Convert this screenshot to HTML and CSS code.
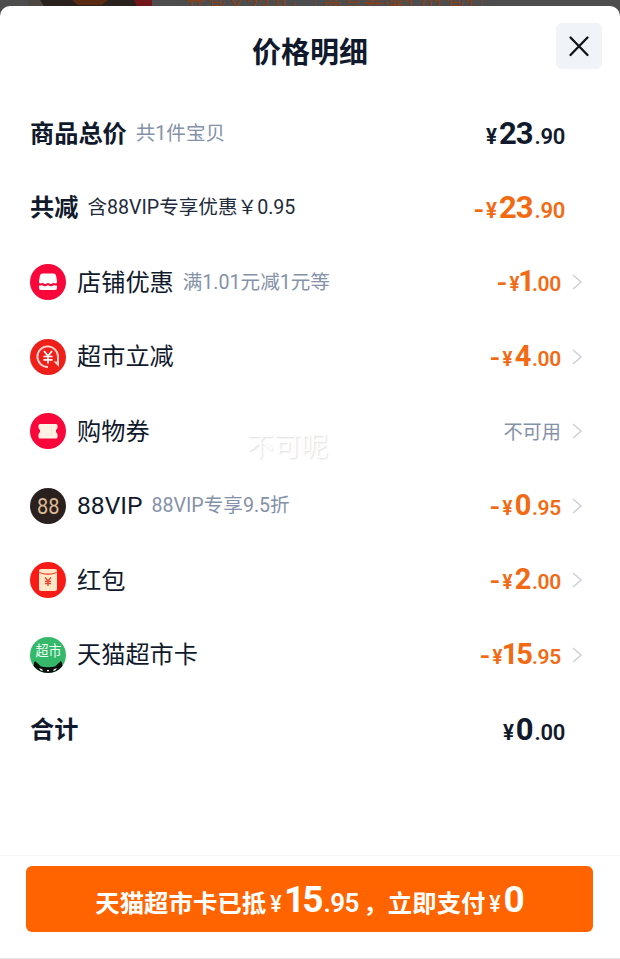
FILE: index.html
```html
<!DOCTYPE html>
<html lang="zh-CN">
<head>
<meta charset="utf-8">
<title>价格明细</title>
<link rel="stylesheet" href="styles.css">
</head>
<body>
<div class="backdrop">
  <svg class="thumb" width="124" height="8" viewBox="0 0 124 8"><path fill="#28211e" d="M0 0h124v8H0z"/><path fill="#4c4743" d="M0 0h12l5 8H0z"/><path fill="#5a2a12" d="M44 0h36l-6 5H50z"/><path fill="#73161a" d="M106 0h18v8h-14z"/></svg>
  <span class="tag tag-a">共减￥23.9 ›</span>
  <span class="tag tag-b">商品券满1.01减1</span>
</div>
<main class="sheet">
  <header class="head">
    <h1>价格明细</h1>
    <button class="close" aria-label="关闭"><svg width="46" height="46" viewBox="0 0 46 46"><path d="M14.500 14.500l17 17.500M31.500 14.500l-17 17.500" fill="none" stroke="#10131a" stroke-width="2.300" stroke-linecap="round"/></svg></button>
  </header>
  <section class="list">
    <div class="row total"><b class="name">商品总价</b><span class="note">共1件宝贝</span><span class="price dark"><i class="yen">¥</i><i class="int">23</i><i class="dec">.90</i></span></div>
    <div class="row total"><b class="name">共减</b><span class="note ink">含88VIP专享优惠￥0.95</span><span class="price"><i class="minus">-</i><i class="yen">¥</i><i class="int">23</i><i class="dec">.90</i></span></div>
    <div class="row">
      <svg class="icon" viewBox="0 0 36 36"><circle cx="18" cy="18" r="18" fill="#f9063a"/><path fill="#fff" d="M12.500 9.500h11q2 0 2.500 2l1 5.500q.3 2.500-1.500 2.500-1.200 0-2.200-.7-1.200 1.200-2.500 1.200T18 18.800Q16.500 20 15.200 20t-2.500-1.200q-1 .7-2.200.7Q8.700 19.500 9 17l1-5.500q.5-2 2.500-2zM9 21.500q1.500.5 3-.5 1.500 1.300 3 1.300t3-1.300q1.500 1.300 3 1.300t3-1.300q1.500 1 3 .5V24q0 2-2 2H11q-2 0-2-2z"/></svg>
      <span class="name">店铺优惠</span><span class="note">满1.01元减1元等</span><span class="price small"><i class="minus">-</i><i class="yen">¥</i><i class="int one single">1</i><i class="dec">.00</i></span><svg class="arrow" viewBox="0 0 10 16"><path d="M1 1l8 7-8 7"/></svg>
    </div>
    <div class="row">
      <svg class="icon" viewBox="0 0 36 36"><circle cx="18" cy="18" r="18" fill="#ee2019"/><path d="M18 28A10.300 10.300 0 1 1 28 18v7" fill="none" stroke="#ffd6cf" stroke-width="1.900"/><path fill="#ffd6cf" d="M23.500 22.500H29V28z"/><path d="M14 12l4 5 4-5M18 17v7.500M13.500 17.500h9M13.500 20.800h9" fill="none" stroke="#fff" stroke-width="1.700"/></svg>
      <span class="name">超市立减</span><span class="price small"><i class="minus">-</i><i class="yen">¥</i><i class="int">4</i><i class="dec">.00</i></span><svg class="arrow" viewBox="0 0 10 16"><path d="M1 1l8 7-8 7"/></svg>
    </div>
    <div class="row">
      <svg class="icon" viewBox="0 0 36 36"><circle cx="18" cy="18" r="18" fill="#f9063a"/><path fill="#fff1e4" d="M10 11h16q1.500 0 1.500 1.500V15l-1.500 2v2l1.500 2v3q0 1.500-1.500 1.500H10q-1.500 0-1.500-1.500v-3l1.500-2v-2l-1.500-2v-2.500Q8.500 11 10 11z"/><path d="M21.500 14v9" stroke="#f8dccf" stroke-dasharray="1.500 1.500"/></svg>
      <span class="name">购物券</span><span class="status">不可用</span><svg class="arrow" viewBox="0 0 10 16"><path d="M1 1l8 7-8 7"/></svg>
    </div>
    <div class="row">
      <svg class="icon" viewBox="0 0 36 36"><circle cx="18" cy="18" r="18" fill="#2a211f"/><text class="vip-text" x="7" y="25.500" textLength="22.500" lengthAdjust="spacingAndGlyphs">88</text></svg>
      <span class="name vip">88VIP</span><span class="note">88VIP专享9.5折</span><span class="price small"><i class="minus">-</i><i class="yen">¥</i><i class="int">0</i><i class="dec">.95</i></span><svg class="arrow" viewBox="0 0 10 16"><path d="M1 1l8 7-8 7"/></svg>
    </div>
    <div class="row">
      <svg class="icon" viewBox="0 0 36 36"><circle cx="18" cy="18" r="18" fill="#f91b16"/><rect x="9" y="7" width="18" height="22" rx="2" fill="#ffe7c8"/><path d="M9 10.500q9 3.500 18 0" fill="none" stroke="#f04b35" stroke-width="1.300"/><path d="M15 15.500l3 3.500 3-3.500M18 19v5M15 19.500h6M15 21.700h6" fill="none" stroke="#e8432b" stroke-width="1.300"/></svg>
      <span class="name">红包</span><span class="price small"><i class="minus">-</i><i class="yen">¥</i><i class="int">2</i><i class="dec">.00</i></span><svg class="arrow" viewBox="0 0 10 16"><path d="M1 1l8 7-8 7"/></svg>
    </div>
    <div class="row">
      <svg class="icon" viewBox="0 0 36 36"><circle cx="18" cy="18" r="18" fill="#35b86a"/><text class="icon-text" x="5.500" y="18.500" textLength="26" lengthAdjust="spacingAndGlyphs">超市</text><path fill="#0b0f0d" d="M3.500 29Q3.500 26 5 24l6 5.500q7 1.500 14 0l6-5.500q1.500 2 1.500 5Q27 36 18 36T3.500 29z"/><path fill="#fff" d="M9 31l3.500 1.500v1.700q-2.500-1-3.500-3.200zM27 31l-3.500 1.500v1.700q2.500-1 3.500-3.200zM17 33h2v1.300h-2z"/></svg>
      <span class="name">天猫超市卡</span><span class="price small"><i class="minus">-</i><i class="yen">¥</i><i class="int one">15</i><i class="dec">.95</i></span><svg class="arrow" viewBox="0 0 10 16"><path d="M1 1l8 7-8 7"/></svg>
    </div>
    <div class="row total"><b class="name">合计</b><span class="price dark"><i class="yen">¥</i><i class="int">0</i><i class="dec">.00</i></span></div>
  </section>
  <span class="toast">不可呢</span>
  <footer class="foot">
    <button class="pay"><span>天猫超市卡已抵</span><i class="yen">¥</i><i class="int one">15</i><i class="dec">.95</i><span class="comma">，</span><span>立即支付</span><i class="yen">¥</i><i class="int">0</i></button>
  </footer>
</main>
</body>
</html>
```
FILE: styles.css
```css
* { box-sizing: border-box; }
body { margin: 0; height: 959px; overflow: hidden; background: #4d4d4d; font-family: Roboto, "Noto Sans CJK SC", sans-serif; color: #111a2c; }
i { font-style: normal; }
button { border: 0; padding: 0; font: inherit; }
.backdrop { height: 6px; display: flex; align-items: flex-start; padding-left: 28px; }
.thumb { flex: none; }
.tag { flex: none; font-size: 20.5px; line-height: 20px; margin-top: -4px; color: #85401c; white-space: nowrap; }
.tag-a { margin-left: 33px; width: 130px; }
.tag-b { padding-left: 6px; width: 168px; border-left: 1px solid #76462f; border-right: 1px solid #76462f; }
.sheet { position: relative; height: 953px; background: #fff; border-radius: 10px 10px 0 0; }
.head { height: 90px; position: relative; }
h1 { margin: 0; padding-top: 26px; text-align: center; font-size: 29px; line-height: 42px; font-weight: 700; }
.close { position: absolute; top: 17px; right: 18px; width: 46px; height: 46px; border-radius: 6px; background: #f0f4f8; }
.close svg { display: block; }
.row { height: 74.5px; display: flex; align-items: center; padding: 0 38px 0 30px; white-space: nowrap; }
.total { padding-right: 55px; }
.icon { width: 36px; height: 36px; margin-right: 11px; flex: none; }
.icon-text { font: 15px "Noto Sans CJK SC", sans-serif; fill: #e9fff1; }
.vip-text { font: 400 21.5px Roboto, sans-serif; fill: #dcb894; }
.name { font-size: 24.2px; line-height: 36px; padding-top: 1px; }
.vip { font-size: 24.6px; }
.note { margin-left: 9px; font-size: 19.6px; line-height: 30px; color: #8591a8; padding-top: 1px; }
.ink { color: #222b3b; }
.price { margin-left: auto; padding-top: 4px; display: flex; align-items: baseline; color: #f26a13; font-weight: 700; line-height: 36px; }
.dark { color: #111a2c; }
.yen { width: 11px; display: flex; justify-content: center; font-size: 22px; transform: scaleX(.93); }
.int { font-size: 31px; letter-spacing: -1px; margin-left: 2px; margin-right: 2px; }
.dec { font-size: 22px; letter-spacing: -0.3px; font-weight: 600; }
.minus { font-size: 24px; width: 8px; margin-right: 4px; transform: scaleX(1.15); }
.small { padding-top: 1px; }
.small .int { font-size: 29px; margin-left: 1.5px; margin-right: 1.5px; }
.small .dec { font-size: 21px; }
.small .yen { font-size: 20px; }
.price .int.one { margin-left: -1.5px; letter-spacing: -2px; margin-right: 1px; }
.price .int.single { margin-right: -1px; }
.status { margin-left: auto; font-size: 19.2px; color: #8591a8; }
.arrow { width: 10px; height: 16px; margin-left: 11px; flex: none; }
.arrow path { fill: none; stroke: #cfd2d6; stroke-width: 1.6; }
.toast { position: absolute; left: 247px; top: 424px; font-size: 27px; line-height: 34px; color: #fff; text-shadow: 1px 1px 2px #ddd; }
.foot { position: absolute; left: 0; right: 0; top: 849px; height: 104px; border-top: 1px solid #f6f6f6; border-bottom: 1px solid #e6e6e6; padding: 10px 27px 0 26px; }
.pay { width: 100%; height: 66px; border-radius: 6px; background: #ff6400; color: #fff; display: flex; align-items: baseline; justify-content: center; font-size: 24.4px; font-weight: 700; line-height: 67px; }
.pay .yen { width: 12px; margin-left: 4px; font-size: 23px; font-weight: 500; }
.pay .int { font-size: 37px; margin-left: 2px; margin-right: 0; }
.pay .one { letter-spacing: -3px; margin-right: 3px; }
.pay .dec { font-size: 26px; letter-spacing: -.6px; }
.comma { width: 29px; padding-left: 4px; }
```
